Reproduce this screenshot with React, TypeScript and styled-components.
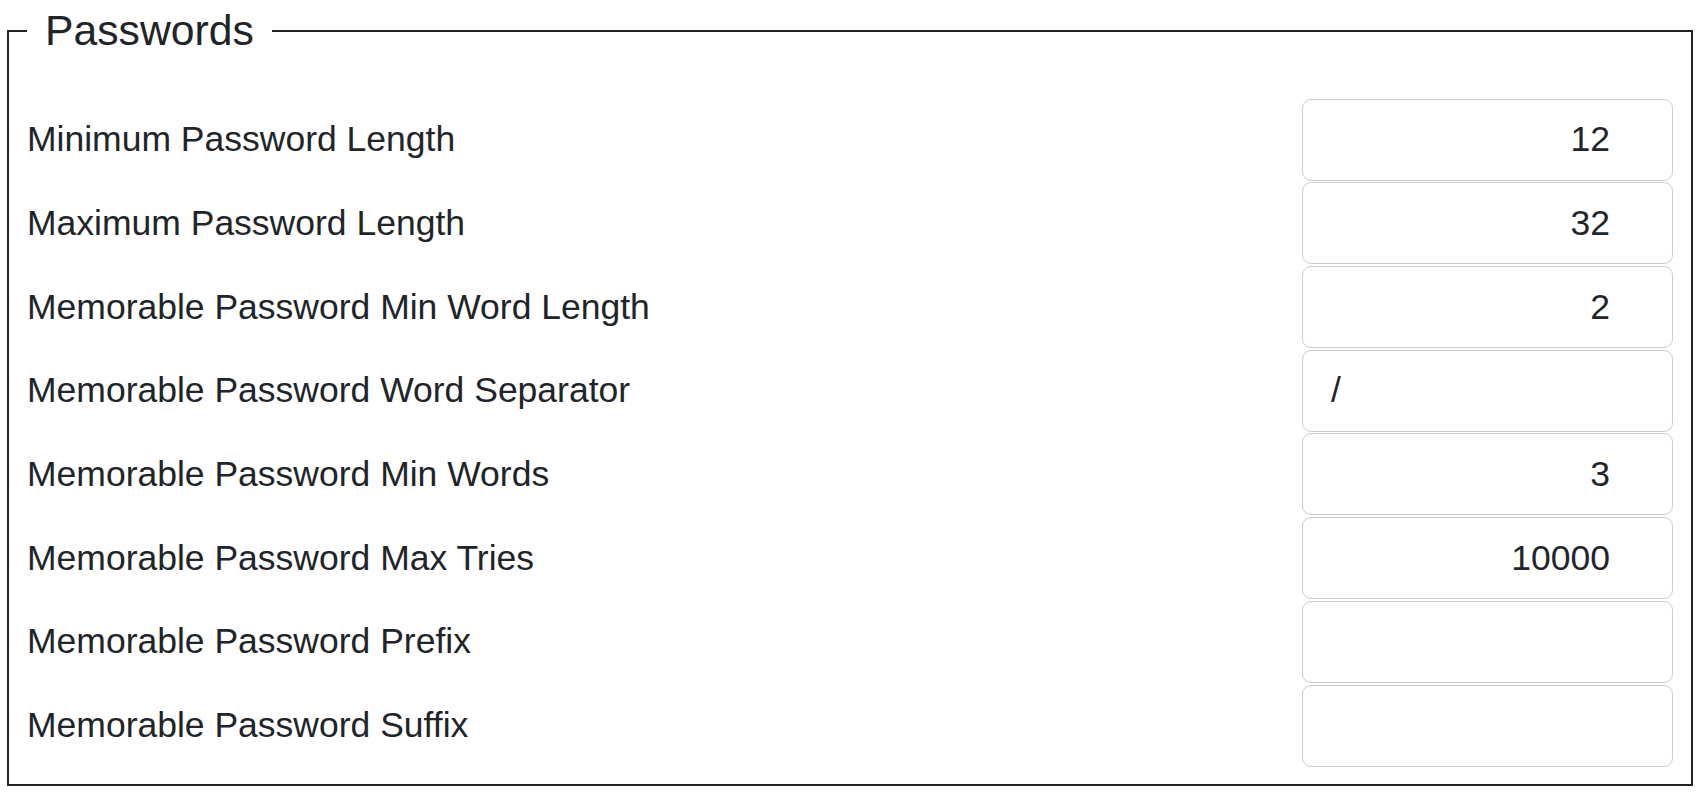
import { createGlobalStyle, styled } from 'styled-components'

const GlobalStyle = createGlobalStyle`
  html, body {
    margin: 0;
    padding: 0;
    background: #fff;
  }
  body {
    font-family: "Liberation Sans", Arial, sans-serif;
    color: #212529;
  }
`

const fields = [
  { label: 'Minimum Password Length', value: '12', numeric: true },
  { label: 'Maximum Password Length', value: '32', numeric: true },
  { label: 'Memorable Password Min Word Length', value: '2', numeric: true },
  { label: 'Memorable Password Word Separator', value: '/', numeric: false },
  { label: 'Memorable Password Min Words', value: '3', numeric: true },
  { label: 'Memorable Password Max Tries', value: '10000', numeric: true },
  { label: 'Memorable Password Prefix', value: '', numeric: false },
  { label: 'Memorable Password Suffix', value: '', numeric: false },
]

export default function App() {
  return (
    <Page>
      <GlobalStyle />
      <Group>
        <Legend>Passwords</Legend>
        <Grid>
          {fields.map((f) => (
            <Row key={f.label}>
              <Label htmlFor={f.label}>{f.label}</Label>
              <Field id={f.label} type="text" readOnly value={f.value} $numeric={f.numeric} />
            </Row>
          ))}
        </Grid>
      </Group>
    </Page>
  )
}

const Page = styled.div`
  padding: 5px 9px 10px 7px;
`

const Group = styled.fieldset`
  margin: 0;
  border: 2px solid #212529;
  padding: 14px 18px 17px 18px;
  min-width: 0;
`

const Legend = styled.legend`
  font-size: 42.7px;
  line-height: 1.2;
  padding: 0 18px;
  margin: 0;
`

const Grid = styled.div`
  display: flex;
  flex-direction: column;
  gap: 1.7px;
  padding-top: 28.5px;
`

const Row = styled.div`
  display: flex;
  align-items: center;
  justify-content: space-between;
`

const Label = styled.label`
  font-size: 35.5px;
`

const Field = styled.input<{ $numeric: boolean }>`
  width: 371px;
  height: 82px;
  box-sizing: border-box;
  border: 1.5px solid #c9ced4;
  border-radius: 9px;
  background: #fff;
  color: #212529;
  font-family: "Liberation Sans", Arial, sans-serif;
  font-size: 35.5px;
  outline: none;
  text-align: ${(p) => (p.$numeric ? 'right' : 'left')};
  padding: ${(p) => (p.$numeric ? '0 62px 0 26px' : '0 26px 0 28px')};
`
